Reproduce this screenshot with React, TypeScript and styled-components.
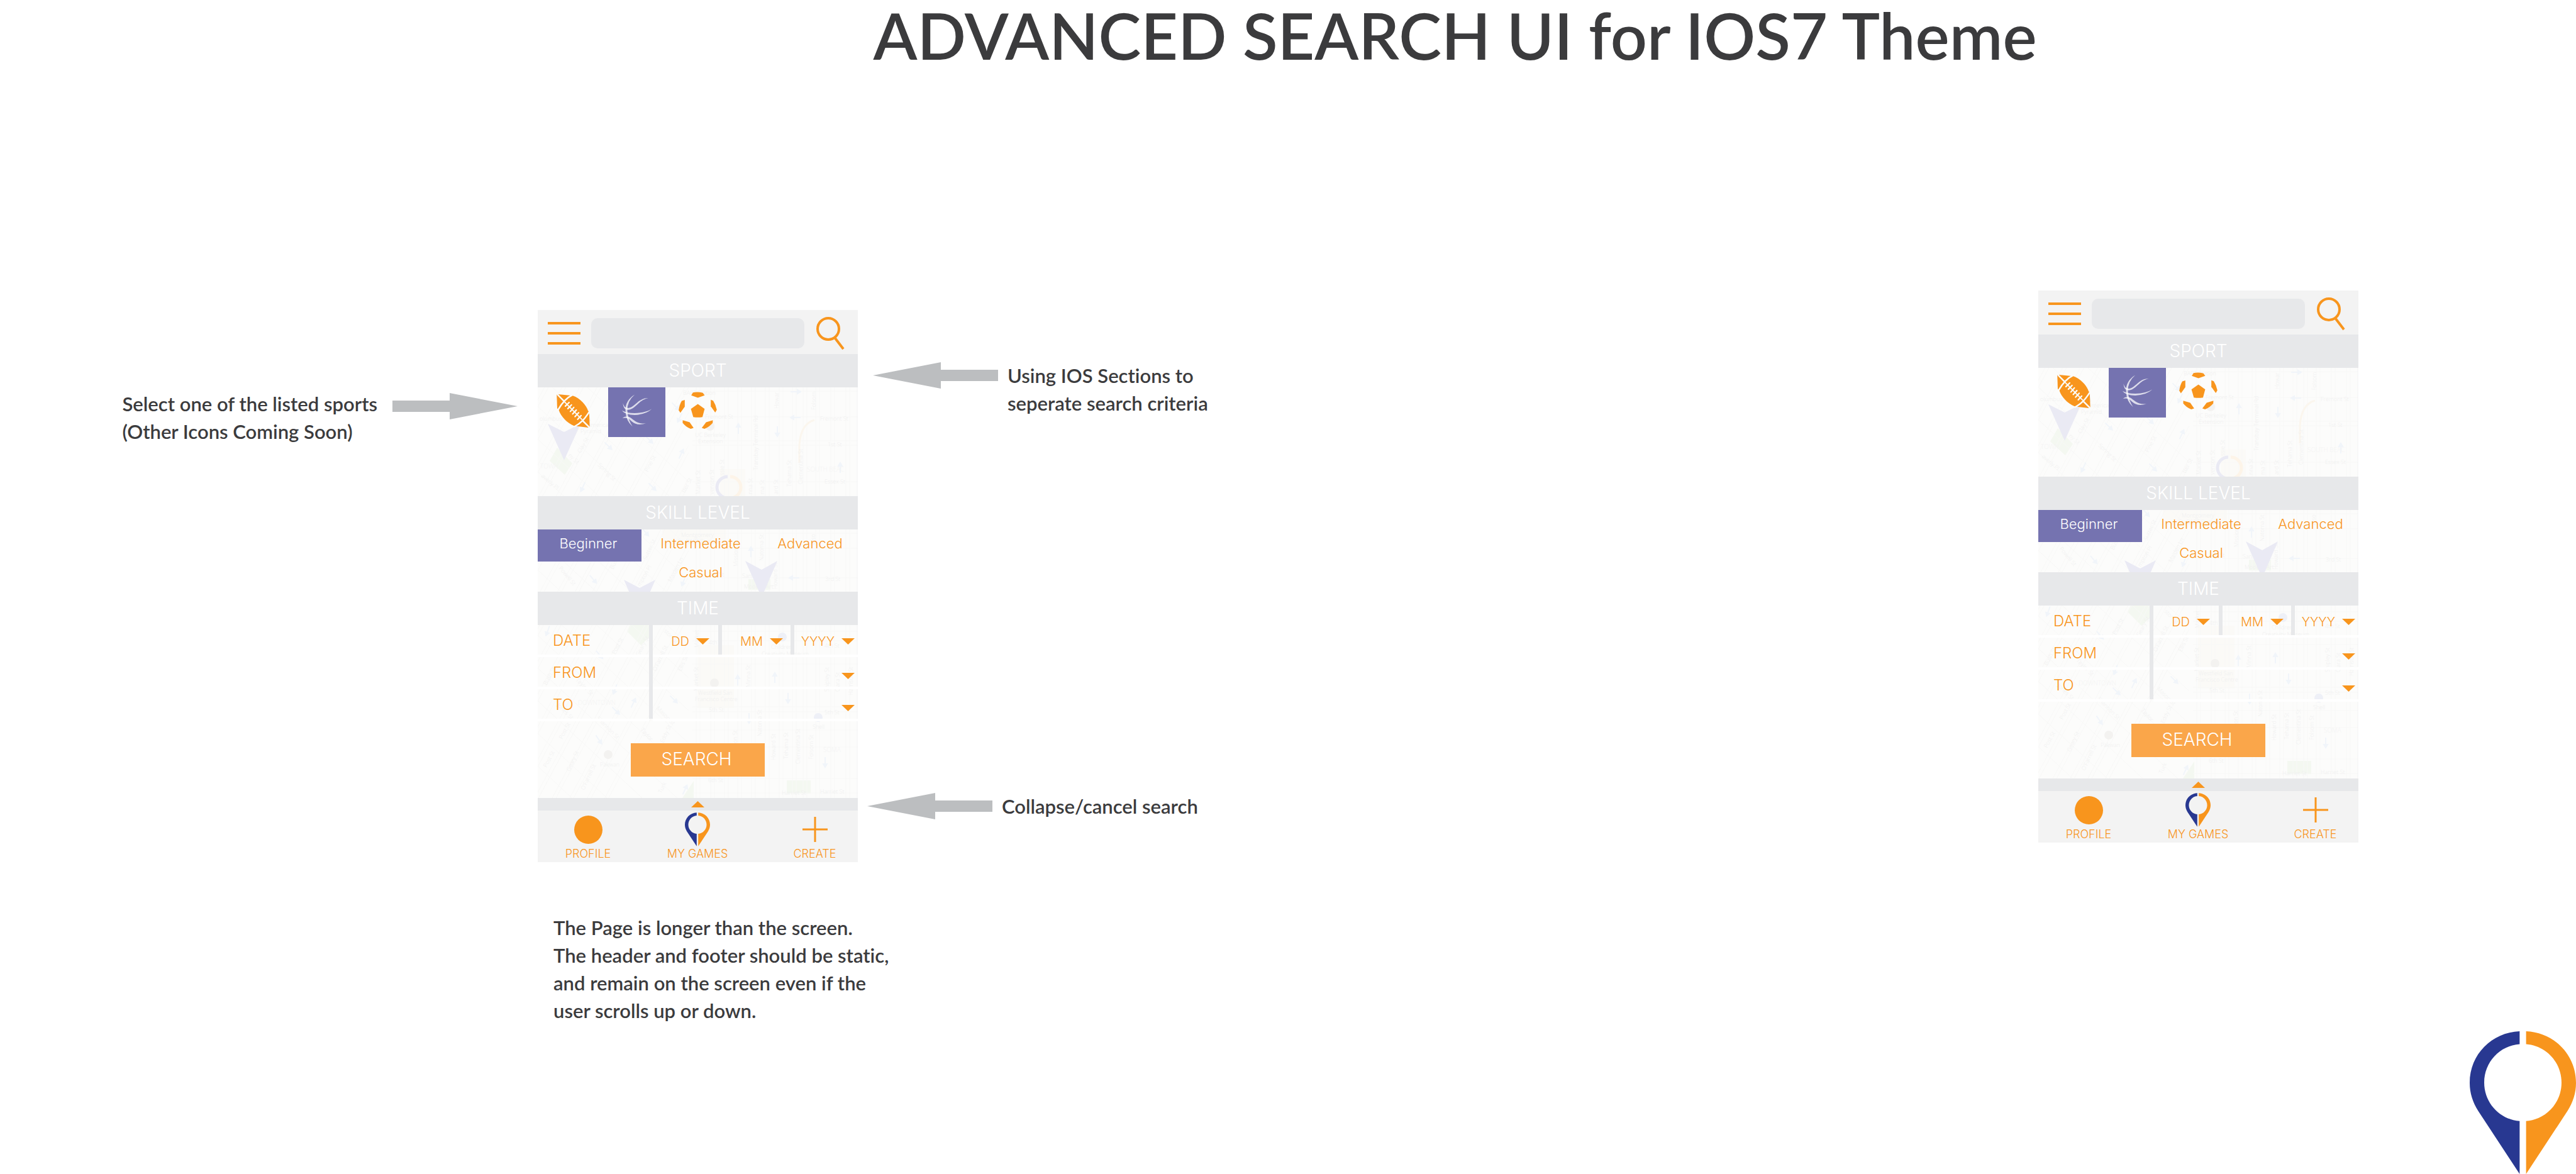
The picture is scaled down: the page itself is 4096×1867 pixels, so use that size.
import React, { useId } from 'react';
import styled, { createGlobalStyle } from 'styled-components';

const orange = '#f8951d';
const blue = '#283891';
const violet = '#7573b0';
const barGrey = '#e7e8ea';
const chrome = '#f3f3f3';
const ink = '#3b3b3d';

const GlobalStyle = createGlobalStyle`
  *, *::before, *::after { box-sizing: border-box; }
  body { margin: 0; background: #fff; color: ${ink}; font-family: Lato, "Open Sans", sans-serif; font-variant-ligatures: none; }
  button, input, select { font: inherit; color: inherit; border: 0; margin: 0; padding: 0; background: none; border-radius: 0; }
  svg { display: block; flex: none; }
`;

/* ---------- page ---------- */

const Page = styled.div`
  display: flex;
  flex-direction: column;
  min-height: 100vh;
`;

const PageTitle = styled.h1`
  margin: 0 0 350px;
  padding-left: 33.9%;
  font-size: 102px;
  line-height: 112px;
  font-weight: 600;
  white-space: nowrap;
`;

const Board = styled.main`
  display: grid;
  grid-template-columns: 855fr 509px 1877fr 509px 346fr;
  align-items: start;
`;

const Column = styled.div<{ $top?: number }>`
  display: flex;
  flex-direction: column;
  padding-top: ${(p) => p.$top ?? 0}px;
`;

const Callout = styled.div<{ $side: 'left' | 'right'; $inset: number; $top?: number }>`
  display: flex;
  align-items: flex-start;
  justify-content: ${(p) => (p.$side === 'left' ? 'flex-end' : 'flex-start')};
  gap: ${(p) => (p.$side === 'left' ? 24 : 15)}px;
  margin-top: ${(p) => p.$top ?? 0}px;
  padding-left: ${(p) => (p.$side === 'right' ? p.$inset : 0)}px;
  padding-right: ${(p) => (p.$side === 'left' ? p.$inset : 0)}px;
`;

const Note = styled.p`
  margin: 0;
  font-size: 31px;
  line-height: 44px;
  font-weight: 600;
  white-space: nowrap;
`;

const PhoneNote = styled(Note)`
  margin-top: 82px;
  padding-left: 25px;
`;

const PageFooter = styled.footer`
  display: flex;
  justify-content: flex-end;
  margin-top: auto;
`;

/* ---------- phone ---------- */

const Phone = styled.form`
  display: flex;
  flex-direction: column;
  font-family: Inter, "Liberation Sans", sans-serif;
  font-weight: 300;
  color: ${orange};
`;

const TopBar = styled.header`
  display: flex;
  align-items: center;
  height: 70px;
  padding: 4px 21px 0 16px;
  background: ${chrome};
`;

const IconButton = styled.button`
  display: flex;
  cursor: pointer;
`;

const SearchField = styled.input`
  flex: 1;
  min-width: 0;
  height: 48px;
  margin: 0 19px 0 17px;
  padding: 0 14px;
  border-radius: 10px;
  background: ${barGrey};
  font-size: 22px;
`;

const Body = styled.div`
  position: relative;
  background: #fcfcfb;
`;

const MapLayer = styled.svg`
  position: absolute;
  inset: 0;
  width: 100%;
  height: 100%;
`;

const Content = styled.div`
  position: relative;
`;

const SectionTitle = styled.h2`
  margin: 0;
  background: ${barGrey};
  color: #fff;
  font-size: 28px;
  line-height: 53px;
  font-weight: 300;
  text-align: center;
`;

const SportRow = styled.div`
  display: grid;
  grid-template-columns: 112px 91px 103px;
  grid-auto-rows: 79px;
  height: 173px;
`;

const SportButton = styled.button<{ $selected?: boolean }>`
  display: flex;
  align-items: center;
  justify-content: center;
  padding-bottom: 5px;
  background: ${(p) => (p.$selected ? violet : 'transparent')};
`;

const LevelGrid = styled.div`
  display: grid;
  grid-template-columns: 165px 1fr 152px;
  grid-template-rows: 46px 46px;
  height: 99px;
`;

const LevelButton = styled.button<{ $selected?: boolean; $column?: number }>`
  grid-column: ${(p) => p.$column ?? 'auto'};
  height: ${(p) => (p.$selected ? 51 : 46)}px;
  padding-right: 4px;
  padding-bottom: ${(p) => (p.$selected ? 7 : 2)}px;
  background: ${(p) => (p.$selected ? violet : 'transparent')};
  color: ${(p) => (p.$selected ? '#fff' : orange)};
  font-size: 22px;
  &:nth-child(3) { padding-right: 0; }
`;

const TimeGrid = styled.div`
  display: grid;
  grid-template-columns: 177px 6px 1fr;
  grid-auto-rows: 51px;
`;

const Divider = styled.i`
  grid-column: 2;
  grid-row: 1 / 4;
  margin-bottom: 4px;
  background: ${barGrey};
`;

const TimeLabel = styled.span`
  grid-column: 1;
  padding-left: 24px;
  border-bottom: 4px solid #fff;
  font-size: 24px;
  line-height: 49px;
`;

const DateFields = styled.div`
  grid-column: 3;
  display: grid;
  grid-template-columns: 110px 115px 1fr;
  border-bottom: 4px solid #fff;
`;

const DateField = styled.label<{ $end: number; $last?: boolean }>`
  display: flex;
  align-items: center;
  justify-content: flex-end;
  gap: 11px;
  padding: 4px ${(p) => p.$end}px 0 0;
  border-right: ${(p) => (p.$last ? 0 : 6)}px solid ${barGrey};
`;

const DateSelect = styled.select`
  appearance: none;
  width: 60px;
  font-size: 20px;
  text-align-last: right;
`;

const TimeField = styled.label`
  grid-column: 3;
  display: flex;
  align-items: center;
  gap: 12px;
  padding: 12px 5px 0 24px;
  border-bottom: 4px solid #fff;
`;

const TimeSelect = styled.select`
  appearance: none;
  flex: 1;
  font-size: 20px;
`;

const SubmitRow = styled.div`
  display: flex;
  justify-content: center;
  padding: 35px 0 34px;
`;

const SubmitButton = styled.button`
  width: 213px;
  height: 53px;
  padding-bottom: 4px;
  padding-right: 4px;
  background: #faa64a;
  color: #fff;
  font-size: 28px;
`;

const CollapseBar = styled.button`
  display: flex;
  align-items: center;
  justify-content: center;
  height: 20px;
  background: ${barGrey};
`;

const TabBar = styled.nav`
  display: grid;
  grid-template-columns: 160px 188px 1fr;
  height: 82px;
  background: ${chrome};
`;

const Tab = styled.a`
  display: flex;
  flex-direction: column;
  align-items: center;
  color: ${orange};
  font-size: 18px;
  line-height: 18px;
  text-decoration: none;
  &:last-child { padding-left: 24px; }
`;

const TabIcon = styled.span`
  display: flex;
  align-items: center;
  height: 60px;
`;

const ProfileDot = styled.span`
  width: 45px;
  height: 45px;
  border-radius: 50%;
  background: ${orange};
`;

/* ---------- drawings ---------- */

const Arrow = ({ flip, drop }: { flip?: boolean; drop?: boolean }) => (
  <svg width="199" height={drop ? 52 : 44} viewBox={drop ? '0 -5 199 52' : '0 -1 199 44'} aria-hidden>
    <path
      d="M0 12H91V0L199 21L91 42V30H0Z"
      fill="#bcbec0"
      transform={flip ? 'matrix(-1 0 0 1 199 0)' : undefined}
    />
  </svg>
);

const Triangle = ({ up }: { up?: boolean }) => (
  <svg width="21" height="10" viewBox="0 0 21 10" aria-hidden>
    <path d={up ? 'M0 10L10.500 0L21 10Z' : 'M0 0H21L10.500 10Z'} fill={orange} />
  </svg>
);

const pinHalf =
  'M426 81C250 88 109 228 109 408C109 475 128 530 163 587L426 987V651C300 641 201 536 201 407C201 277 300 172 426 163Z';

const Pin = ({ width, height }: { width: number; height: number }) => (
  <svg width={width} height={height} viewBox="109 81 675 906" aria-hidden>
    <path d={pinHalf} fill={blue} />
    <path d={pinHalf} fill={orange} transform="matrix(-1 0 0 1 893 0)" />
  </svg>
);

const MenuIcon = () => (
  <svg width="52" height="36" viewBox="0 0 52 36" aria-hidden>
    <path d="M0 2H52M0 18H52M0 34H52" stroke={orange} strokeWidth="4" />
  </svg>
);

const SearchIcon = () => (
  <svg width="45" height="53" viewBox="0 0 45 53" aria-hidden>
    <g fill="none" stroke={orange} strokeWidth="4">
      <ellipse cx="19" cy="19" rx="17" ry="17" />
      <path d="M30 34L43 51" />
    </g>
  </svg>
);

const Football = () => (
  <svg width="53" height="53" viewBox="111 58 211 213" aria-hidden>
    <path
      d="M111 60L118 58L213 67C262 82 302 132 311 163L318 172L322 271L312 271L222 260C176 240 138 200 124 158L114 148Z"
      fill={orange}
    />
    <g fill="none" stroke="#fcfcfb" strokeWidth="10">
      <path d="M114 58L156 101M276 226L322 272" />
      <path d="M211 63C175 80 150 105 119 158M320 170C300 195 285 232 222 266" />
      <path d="M160 106L275 222" strokeWidth="7" />
      <g strokeWidth="9" strokeLinecap="round">
        <path d="M166 134L190 110M182 150L205 126M198 168L220 142M213 184L236 159M228 201L251 176M245 218L267 194" />
      </g>
    </g>
  </svg>
);

const Basketball = () => (
  <svg width="49" height="52" viewBox="536 62 194 208" aria-hidden>
    <g fill="#fff" fillOpacity=".75">
      <path d="M620 64Q560 100 561 165Q564 232 606 267Q577 225 573 165Q572 105 620 64Z" />
      <path d="M545 118Q546 158 575 161C625 160 645 96 706 87C645 80 620 150 575 150Q552 148 545 118Z" />
      <path d="M538 165Q560 194 620 194Q690 191 729 155Q690 180 620 182Q568 182 538 165Z" />
      <path d="M541 215Q560 196 588 208C612 222 635 254 692 247C650 260 625 254 600 234Q570 204 541 215Z" />
    </g>
  </svg>
);

const Soccer = () => (
  <svg width="61" height="60" viewBox="896 46 243 238" aria-hidden>
    <g fill={orange}>
      <path d="M976 68L987 50Q1018 45 1050 52L1061 68L1018 83Z" />
      <path d="M1018 123L1061 154L1047 206Q1018 210 989 206L974 154Z" />
      <path d="M935 97V140L907 179L897 162Q900 130 916 103Z" />
      <path d="M1100 96L1115 102Q1133 130 1138 160L1128 177L1100 138Z" />
      <path d="M922 226L966 239L991 275L973 281Q940 268 922 243Z" />
      <path d="M1113 226L1070 239L1043 275L1060 281Q1092 268 1112 243Z" />
    </g>
  </svg>
);

/* street names: text, x, y, rotation */
const streets: [string, number, number, number][] = [
  ['Fremont St', 266, 50, 0], ['Fremont St', 449, 53, 0], ['BART Station', 231, 12, 0], ['olumbus', 3, 53, 0],
  ['america', 80, 63, 0], ['Pyramid', 68, 73, 0], ['UC Berkeley', 250, 79, 0], ['Extension', 255, 89, 0],
  ['1st St', 461, 94, 0], ['Essex St', 456, 153, 0], ['Howar', 383, 34, -90], ['Folsom', 442, 36, -90],
  ['Transbay Terminal Rd', 350, 132, -90], ['Tehama St', 403, 158, -90], ['Clementina St', 421, 154, -90],
  ['ssie St', 296, 140, -90], ['Market St', 258, 170, -90], ['venson St', 280, 170, -90], ['nna St', 341, 170, -90],
  ['ma St', 360, 170, -90], ['ard St', 382, 170, -90], ['Clay St', 68, 105, -60], ['ny St', 48, 109, 43],
  ['Spring St', 95, 124, 45], ['Pine St', 175, 135, -62], ['tter St', 234, 168, -62], ['averly Pl', 5, 142, 40],
  ['Montgomery', 228, 238, 0], ['St. BART Station', 223, 248, 0], ['Mission St', 318, 285, -90],
  ['Natoma St', 359, 276, -90], ['olso', 441, 250, -90], ['Powell St', 33, 288, 50], ['Bush', 120, 290, -65],
  ['Sutter St', 173, 275, -65], ['Maiden Ln', 212, 310, -62], ['mpton Pl', 163, 317, -60], ['3rd St', 457, 308, 0],
  ['3rd St', 272, 301, 0], ['San', 325, 303, 0], ['Modern Art', 328, 320, 0], ['Howard St', 381, 321, -90],
  ['Post St', 123, 425, -62], ['Geary St', 161, 428, -62], ['ston St', 200, 388, 45], ['4th', 272, 409, 0],
  ['4th St', 456, 414, 0], ['Children', 371, 416, 0], ['Creativity Museum', 356, 427, 0],
  ["O'Farrell St", 188, 452, -65], ['Ellis St', 228, 452, -65], ['Market', 256, 414, -90], ['Bush St', 14, 474, -62],
  ['Taylor St', 60, 466, 45], ['Market St', 255, 483, -90], ['Minna St', 338, 477, -90], ['Westfield San', 255, 489, 0],
  ['Francisco Centre', 250, 499, 0], ['5th St', 272, 516, 0], ['5th St', 456, 520, 0], ['Shipley St', 463, 484, -90],
  ['Clara St', 480, 484, -90], ['Harrison St', 501, 490, -90], ['Jones St', 30, 506, 45], ['Shannon St', 93, 527, 45],
  ['Mason St', 188, 511, 45], ['Natoma St', 356, 555, -90], ['Howard St', 378, 593, -90], ['Tehama St', 398, 591, -90],
  ['Clementina St', 417, 599, -90], ['Folsom St', 438, 592, -90], ['on St', 317, 566, -90], ['Shell', 437, 543, 0],
  ['Post St', 39, 560, -62], ['Eddy St', 200, 566, -65], ['Taylor', 163, 545, 48], ['Post St', 14, 605, -62],
  ['Geary St', 51, 611, -65], ["O'Farrell St", 74, 641, -65], ['Pakwan', 99, 603, 0], ['Turk', 197, 646, -65],
  ['Harriet St', 388, 648, 0], ['Harriet St', 449, 646, 0], ['6th St', 271, 628, 0],
];
const districts: [string, number, number][] = [
  ['TOWN', 4, 129], ['SOUTH BEAC', 428, 134], ['DOWNTOWN', 64, 505], ['SOMA', 454, 580],
];
const directions: [number, number, number][] = [
  [112, 93, 45], [177, 83, 45], [228, 106, -65], [72, 158, 115], [182, 158, 45], [219, 30, 45], [226, 48, 115],
  [410, 7, 0], [410, 48, 180], [319, 66, -90], [381, 70, 90], [481, 128, -90], [171, 230, 50], [88, 305, 50],
  [339, 262, -90], [408, 303, 180], [232, 308, 110], [16, 387, 110], [98, 425, 50], [318, 466, -90],
  [377, 462, -90], [123, 480, 110], [216, 496, 45], [152, 502, -65], [124, 514, 45], [398, 494, 90], [97, 560, 55],
  [336, 526, 90], [457, 596, 90], [234, 640, -65],
];
const avenues = [252, 275, 297, 318, 340, 362, 384, 405, 422, 442, 466, 490];
const crossings = [6, 47, 85, 92, 150, 218, 232, 256, 303, 340, 388, 403, 440, 508, 516, 545, 572, 622, 645];

const CityMap = () => {
  const clip = useId();
  return (
    <MapLayer viewBox="0 0 509 653" preserveAspectRatio="none" aria-hidden>
      <defs>
        <clipPath id={clip}><path d="M0 0H240V653H0Z" /></clipPath>
      </defs>
      <g fill="#f4f8f1">
        <path d="M31 96L55 121L43 139L19 117Z" />
        <path d="M147 378H177V398L164 410L142 388Z" />
        <path d="M396 625H434V646H396ZM230 653L248 626V653ZM335 305H370V322H335Z" />
      </g>
      <path d="M254 410H312V510H254ZM198 223H300V250H198ZM290 130H330V173H290Z" fill="#fbfaf7" />
      <g stroke="#f8f8f7" strokeWidth="1" fill="none">
        {avenues.map((x) => <path key={x} d={`M${x} 0V653M${x + 6} 0V653`} />)}
        {crossings.map((y) => <path key={y} d={`M246 ${y}H509`} />)}
        <g clipPath={`url(#${clip})`}>
          {Array.from({ length: 18 }, (_, i) => (
            <path key={i} d={`M-200 ${-260 + i * 52}L240 ${150 + i * 52}M-60 ${i * 52 + 80}L240 ${i * 52 - 480}M-56 ${i * 52 + 84}L244 ${i * 52 - 476}`} />
          ))}
        </g>
        <path d="M416 120V92Q418 58 440 52" stroke="#fbf6ee" strokeWidth="3" />
        <path d="M508 0V653" stroke="#f3f3f5" />
      </g>
      <g stroke="#f1f5fa" strokeWidth="2" fill="#f1f5fa">
        {directions.map(([x, y, r], i) => (
          <path key={i} transform={`translate(${x} ${y}) rotate(${r})`} d="M-8 0H5M3 -3L8 0L3 3Z" />
        ))}
      </g>
      <g fill="#f3f2f0">
        <circle cx="274" cy="62" r="7" />
        <path d="M78 54L81 37L84 54Z" />
        <circle cx="112" cy="584" r="7" />
        <circle cx="281" cy="470" r="7" />
        <circle cx="389" cy="397" r="7" fill="#eef0f7" />
        <circle cx="446" cy="525" r="7" fill="#eef0f7" />
      </g>
      <g fill="#f0f0f0" fontFamily="Open Sans, sans-serif" fontSize="9">
        {streets.map(([name, x, y, r], i) => (
          <text key={i} transform={`translate(${x} ${y}) rotate(${r})`}>{name}</text>
        ))}
      </g>
      <g fill="#f4f4f4" fontFamily="Open Sans, sans-serif" fontSize="10">
        {districts.map(([name, x, y]) => <text key={name} x={x} y={y}>{name}</text>)}
      </g>
      <g fill="#eaeaf4">
        <path d="M16 58L42 71L68 58L42 116Z" />
        <path d="M137 306L162 319L187 306L162 364Z" />
        <path d="M330 276L356 290L381 276L356 334Z" />
      </g>
      <g fill="none" strokeWidth="5">
        <path d="M302 142A17 17 0 0 0 302 176" stroke="#eaeaf4" />
        <path d="M306 142A17 17 0 0 1 306 176" stroke="#fdf4e8" />
      </g>
    </MapLayer>
  );
};

const SearchScreen = () => (
  <Phone onSubmit={(e) => e.preventDefault()}>
    <TopBar>
      <IconButton type="button" aria-label="Menu"><MenuIcon /></IconButton>
      <SearchField type="search" aria-label="Search" />
      <IconButton type="submit" aria-label="Search"><SearchIcon /></IconButton>
    </TopBar>
    <SectionTitle>SPORT</SectionTitle>
    <Body>
      <CityMap />
      <Content>
        <SportRow>
          <SportButton type="button" aria-label="Football"><Football /></SportButton>
          <SportButton type="button" aria-label="Basketball" aria-pressed $selected><Basketball /></SportButton>
          <SportButton type="button" aria-label="Soccer"><Soccer /></SportButton>
        </SportRow>
        <SectionTitle>SKILL LEVEL</SectionTitle>
        <LevelGrid>
          <LevelButton type="button" aria-pressed $selected>Beginner</LevelButton>
          <LevelButton type="button">Intermediate</LevelButton>
          <LevelButton type="button">Advanced</LevelButton>
          <LevelButton type="button" $column={2}>Casual</LevelButton>
        </LevelGrid>
        <SectionTitle>TIME</SectionTitle>
        <TimeGrid>
          <Divider />
          <TimeLabel>DATE</TimeLabel>
          <DateFields>
            <DateField $end={14}>
              <DateSelect aria-label="Day"><option>DD</option></DateSelect>
              <Triangle />
            </DateField>
            <DateField $end={12}>
              <DateSelect aria-label="Month"><option>MM</option></DateSelect>
              <Triangle />
            </DateField>
            <DateField $end={5} $last>
              <DateSelect aria-label="Year"><option>YYYY</option></DateSelect>
              <Triangle />
            </DateField>
          </DateFields>
          <TimeLabel>FROM</TimeLabel>
          <TimeField>
            <TimeSelect aria-label="From"><option /></TimeSelect>
            <Triangle />
          </TimeField>
          <TimeLabel>TO</TimeLabel>
          <TimeField>
            <TimeSelect aria-label="To"><option /></TimeSelect>
            <Triangle />
          </TimeField>
        </TimeGrid>
        <SubmitRow>
          <SubmitButton type="submit">SEARCH</SubmitButton>
        </SubmitRow>
      </Content>
    </Body>
    <CollapseBar type="button" aria-label="Collapse search"><Triangle up /></CollapseBar>
    <TabBar>
      <Tab href="#profile"><TabIcon><ProfileDot /></TabIcon>PROFILE</Tab>
      <Tab href="#games"><TabIcon><Pin width={40} height={54} /></TabIcon>MY GAMES</Tab>
      <Tab href="#create">
        <TabIcon>
          <svg width="40" height="40" viewBox="0 0 40 40" aria-hidden>
            <path d="M0 20H40M20 0V40" stroke={orange} strokeWidth="3" />
          </svg>
        </TabIcon>
        CREATE
      </Tab>
    </TabBar>
  </Phone>
);

export default function App() {
  return (
    <Page>
      <GlobalStyle />
      <PageTitle>ADVANCED SEARCH UI for IOS7 Theme</PageTitle>
      <Board>
        <Column $top={158}>
          <Callout $side="left" $inset={32}>
            <Note>Select one of the listed sports<br />(Other Icons Coming Soon)</Note>
            <Arrow drop />
          </Callout>
        </Column>
        <Column $top={31}>
          <SearchScreen />
          <PhoneNote>
            The Page is longer than the screen.<br />
            The header and footer should be static,<br />
            and remain on the screen even if the<br />
            user scrolls up or down.
          </PhoneNote>
        </Column>
        <Column $top={113}>
          <Callout $side="right" $inset={24}>
            <Arrow flip />
            <Note>Using IOS Sections to<br />seperate search criteria</Note>
          </Callout>
          <Callout $side="right" $inset={15} $top={597}>
            <Arrow flip />
            <Note>Collapse/cancel search</Note>
          </Callout>
        </Column>
        <SearchScreen />
      </Board>
      <PageFooter><Pin width={169} height={227} /></PageFooter>
    </Page>
  );
}
